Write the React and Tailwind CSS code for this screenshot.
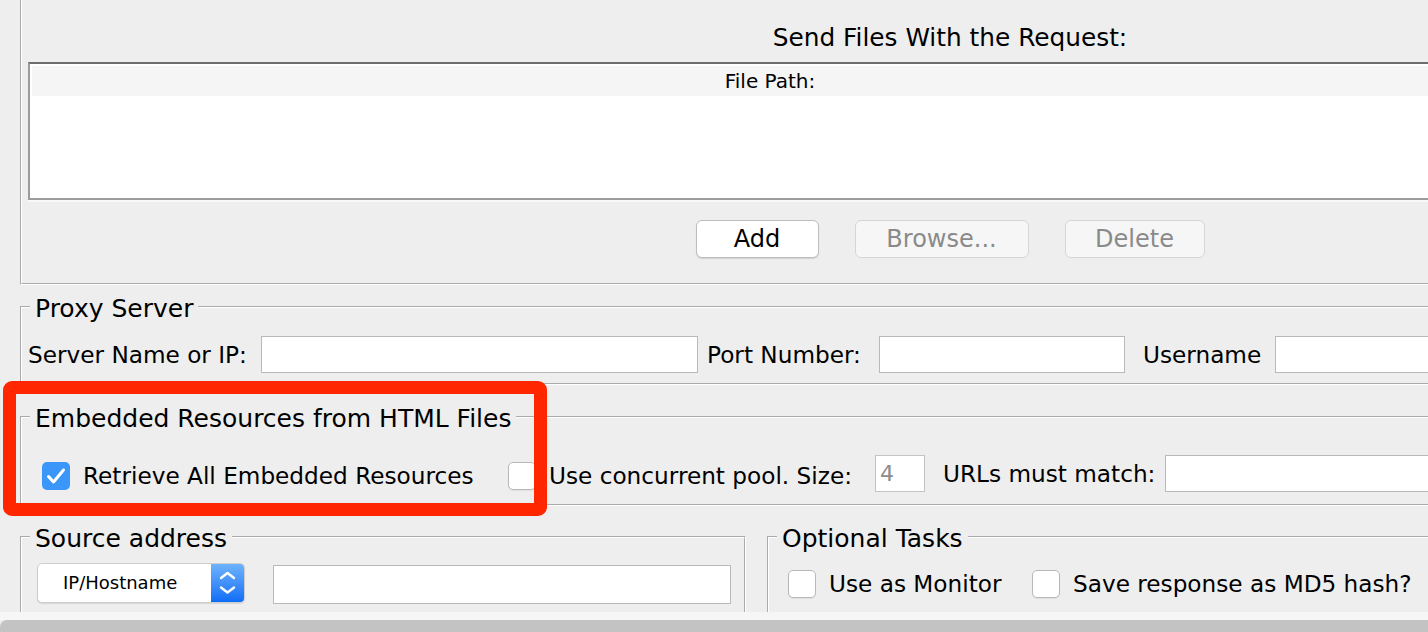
function Check({ checked }) {
  if (checked) {
    return (
      <span className="w-[28px] h-[28px] rounded-[5px] bg-[#3b96f9] flex items-center justify-center shrink-0">
        <svg width="28" height="28" viewBox="0 0 28 28">
          <path d="M6.5 14.5L11.5 20L21.5 8" fill="none" stroke="white" strokeWidth="3" strokeLinecap="round" strokeLinejoin="round" />
        </svg>
      </span>
    );
  }
  return <span className="block w-[28px] h-[28px] rounded-[5px] bg-white border border-[#b8b8b8] shrink-0 shadow-[0_1px_1px_rgba(0,0,0,0.06)]" />;
}

function Group({ title, className = "", children }) {
  return (
    <fieldset className={`border-2 [border-style:groove] border-white pl-[6px] min-w-0 ${className}`}>
      <legend className="ml-[2px] px-[5px] pt-[4px] text-[25px] leading-[26px]">{title}</legend>
      {children}
    </fieldset>
  );
}

function Field({ className = "" }) {
  return <div className={`h-[37px] bg-white border border-[#b9b9b9] shrink-0 ${className}`} />;
}

export default function App() {
  const label = "text-[23.2px] leading-[30px] whitespace-nowrap shrink-0";

  return (
    <div className="relative w-[1428px] h-[632px] overflow-hidden bg-[#eeeeee] flex flex-col text-black font-['DejaVu_Sans',sans-serif]">
      <div className="h-[612px] overflow-hidden pl-[20px] shrink-0">
        <div className="w-[1858px]">
          {/* file upload panel */}
          <div className="border-l-2 border-b-2 [border-style:groove] border-white pt-[23px] px-[6px] pb-[25px]">
            <div className="text-center text-[24.8px] leading-[30px]">Send Files With the Request:</div>
            <div className="mt-[9px] w-[1482px] border-2 border-[#9b9b9b] border-t-[#6d6d6d] bg-white pt-[2px] pl-[2px] shadow-[0_2px_0_#f8f8f8]">
              <div className="h-[30px] bg-[#f5f5f5] text-center text-[20px] leading-[30px]">File Path:</div>
              <div className="h-[102px]" />
            </div>
            <div className="mt-[20px] flex justify-center gap-[36px]">
              <button className="w-[123px] h-[38px] rounded-[6px] bg-white border border-[#bdbdbd] shadow-[0_1px_1px_rgba(0,0,0,0.12)] text-[24px] leading-[36px]">Add</button>
              <button className="w-[174px] h-[38px] rounded-[6px] bg-[#f6f6f6] border border-[#d6d6d6] text-[#8a8a8a] text-[24px] leading-[36px]">Browse...</button>
              <button className="w-[140px] h-[38px] rounded-[6px] bg-[#f6f6f6] border border-[#d6d6d6] text-[#8a8a8a] text-[24px] leading-[36px]">Delete</button>
            </div>
          </div>

          <Group title="Proxy Server" className="mt-[7px] pt-[14px] pb-[10px]">
            <div className="flex items-center h-[37px]">
              <span className={`${label} w-[233px]`}>Server Name or IP:</span>
              <Field className="w-[437px]" />
              <span className={`${label} ml-[9px] w-[172px]`}>Port Number:</span>
              <Field className="w-[246px]" />
              <span className={`${label} ml-[18px] w-[132px]`}>Username</span>
              <Field className="w-[400px]" />
            </div>
          </Group>

          <Group title="Embedded Resources from HTML Files" className="mt-[17px] pt-[23px] pb-[12px]">
            <div className="flex items-center h-[37px]">
              <span className="flex items-center mt-[5px] ml-[14px]">
                <Check checked />
                <span className={`${label} ml-[13px] w-[425px]`}>Retrieve All Embedded Resources</span>
                <Check />
                <span className={`${label} ml-[13px] w-[326px]`}>Use concurrent pool. Size:</span>
              </span>
              <div className="w-[50px] h-[37px] bg-white border border-[#c4c4c4] pl-[4px] text-[22px] leading-[35px] text-[#8c8c8c] shrink-0">4</div>
              <span className={`${label} ml-[18px] w-[222px]`}>URLs must match:</span>
              <Field className="w-[400px]" />
            </div>
          </Group>

          <div className="mt-[16px] flex items-start">
            <Group title="Source address" className="w-[726px] pt-[11px] pb-[20px]">
              <div className="flex items-start">
                <div className="ml-[9px] w-[208px] h-[40px] flex rounded-[5px] bg-white border border-[#cdcdcd] shadow-[0_1px_1px_rgba(0,0,0,0.1)] overflow-hidden shrink-0">
                  <span className="flex-1 pl-[25px] text-[18px] leading-[38px]">IP/Hostname</span>
                  <span className="w-[33px] h-full bg-gradient-to-b from-[#6db2fb] to-[#0b6df6] flex items-center justify-center">
                    <svg width="33" height="38" viewBox="0 0 33 38">
                      <path d="M10 14L16.5 9L23 14" fill="none" stroke="white" strokeWidth="2.4" strokeLinecap="round" strokeLinejoin="round" />
                      <path d="M10 23.5L16.5 28.5L23 23.5" fill="none" stroke="white" strokeWidth="2.4" strokeLinecap="round" strokeLinejoin="round" />
                    </svg>
                  </span>
                </div>
                <div className="ml-[28px] mt-[2px] w-[458px] h-[39px] bg-white border border-[#b9b9b9]" />
              </div>
            </Group>
            <Group title="Optional Tasks" className="ml-[21px] flex-1 pt-[18px] pb-[20px]">
              <div className="flex items-center h-[28px]">
                <span className="flex ml-[13px]"><Check /></span>
                <span className={`${label} ml-[13px] w-[203px]`}>Use as Monitor</span>
                <Check />
                <span className={`${label} ml-[13px]`}>Save response as MD5 hash?</span>
              </div>
            </Group>
          </div>
        </div>
      </div>
      <div className="h-[8px] bg-[#f6f6f6] shrink-0" />
      <div className="h-[12px] bg-[#c3c3c3] rounded-tl-[7px] shrink-0" />

      {/* annotation */}
      <div className="absolute left-[3px] top-[381px] w-[544px] h-[135px] border-[13px] border-[#ff2600] rounded-[9px] pointer-events-none" />
    </div>
  );
}
